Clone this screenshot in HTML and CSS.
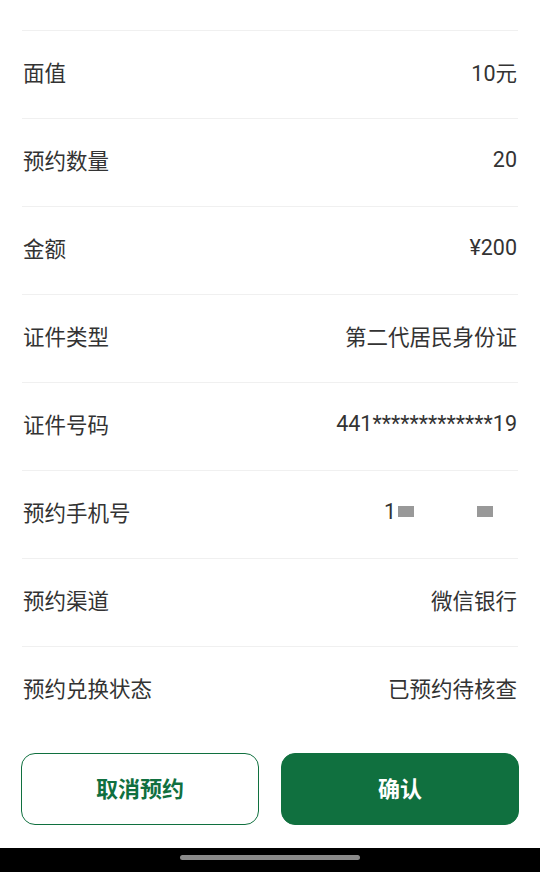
FILE: index.html
```html
<!DOCTYPE html>
<html lang="zh-CN">
<head>
<meta charset="utf-8">
<link rel="stylesheet" href="styles.css">
</head>
<body>
<div class="page">
  <div class="list">
    <div class="row"><span class="label">面值</span><span class="value">10元</span></div>
    <div class="row"><span class="label">预约数量</span><span class="value">20</span></div>
    <div class="row"><span class="label">金额</span><span class="value">¥200</span></div>
    <div class="row"><span class="label">证件类型</span><span class="value">第二代居民身份证</span></div>
    <div class="row"><span class="label">证件号码</span><span class="value">441*************19</span></div>
    <div class="row"><span class="label">预约手机号</span><span class="value phone"><span class="digit">1</span><span class="mask"></span><span class="gap-a"></span><span class="mask"></span><span class="gap-b"></span></span></div>
    <div class="row"><span class="label">预约渠道</span><span class="value">微信银行</span></div>
    <div class="row"><span class="label">预约兑换状态</span><span class="value">已预约待核查</span></div>
  </div>
  <div class="actions">
    <button class="btn btn-outline">取消预约</button>
    <button class="btn btn-solid">确认</button>
  </div>
</div>
<div class="navbar"><div class="handle"></div></div>
</body>
</html>
```
FILE: styles.css
```css
* { box-sizing: border-box; }
html, body {
  margin: 0;
  padding: 0;
  background: #ffffff;
}
body {
  width: 540px;
  height: 872px;
  display: flex;
  flex-direction: column;
  font-family: Roboto, "Noto Sans CJK SC", sans-serif;
  color: #333333;
}
.page {
  flex: 1;
  padding: 30px 22px 0 22px;
}
.list {
  display: flex;
  flex-direction: column;
}
.row {
  height: 88px;
  border-top: 1px solid #f0f0f0;
  display: flex;
  align-items: center;
  justify-content: space-between;
  padding: 0 1px 6px 1px;
  font-size: 21.5px;
}
.label { color: #333333; }
.value { color: #333333; }
.phone {
  display: inline-flex;
  align-items: center;
}
.phone .digit { margin-right: 2px; }
.phone .mask {
  display: inline-block;
  width: 16px;
  height: 11px;
  background: #999999;
}
.phone .gap-a { display: inline-block; width: 63px; }
.phone .gap-b { display: inline-block; width: 24px; }
.actions {
  margin-top: 19px;
  display: flex;
  gap: 22px;
  margin-left: -1px;
  margin-right: -1px;
}
.btn {
  flex: 1;
  height: 72px;
  border-radius: 14px;
  font-family: "Noto Sans CJK SC", sans-serif;
  font-size: 22px;
  font-weight: 700;
  padding: 0 0 4px 0;
  cursor: pointer;
}
.btn-outline {
  background: #ffffff;
  border: 1.5px solid #10703f;
  color: #10703f;
}
.btn-solid {
  background: #10703f;
  border: 1.5px solid #10703f;
  color: #ffffff;
}
.navbar {
  height: 24px;
  background: #000000;
  display: flex;
  justify-content: center;
  padding-top: 7px;
}
.handle {
  width: 180px;
  height: 5px;
  border-radius: 3px;
  background: #8a8a8a;
}
```
